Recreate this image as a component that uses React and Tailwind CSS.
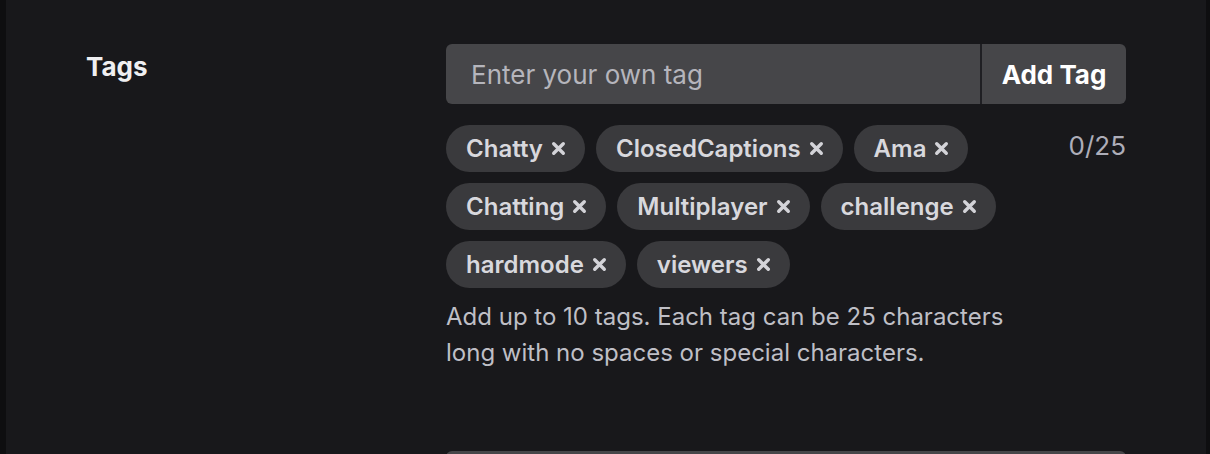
import React from "react";

const tags = ["Chatty", "ClosedCaptions", "Ama", "Chatting", "Multiplayer", "challenge", "hardmode", "viewers"];

function X() {
  return (
    <svg width="17" height="17" viewBox="0 0 16 16" className="shrink-0">
      <path d="M3.5 3.5 L12.5 12.5 M12.5 3.5 L3.5 12.5" stroke="#d3d3d8" strokeWidth="3.2" strokeLinecap="round" />
    </svg>
  );
}

export default function App() {
  return (
    <div
      className="w-[1210px] h-[454px] overflow-hidden flex bg-[#0e0e10]"
      style={{ fontFamily: "Inter, 'Noto Sans', sans-serif" }}
    >
      <div className="w-[6px] shrink-0 bg-[#0e0e10]" />
      <div className="w-[1200px] h-full bg-[#18181b] flex flex-col">
        <div className="ml-[80px] w-[1040px] h-[5px] bg-[#1f1f23]" />
        <div className="flex pl-[80px] pt-[44px]">
          <div className="w-[360px] shrink-0 pt-[6px] text-[26px] leading-[34px] font-bold text-[#efeff1]">Tags</div>
          <div className="w-[680px] flex flex-col">
            <div className="flex h-[60px] rounded-[6px] overflow-hidden">
              <div className="flex-1 bg-[#464649] flex items-center pl-[25px] text-[26px] text-[#b5b5bc]">
                Enter your own tag
              </div>
              <div className="w-[2px] bg-[#1f1f23]" />
              <div className="w-[144px] bg-[#464649] flex items-center justify-center text-[26px] font-bold text-[#ffffff]">
                Add Tag
              </div>
            </div>
            <div className="flex justify-between mt-[21px]">
              <div className="w-[600px] flex flex-wrap gap-x-[11px] gap-y-[11px]">
                {tags.map((t) => (
                  <div
                    key={t}
                    className="h-[47px] rounded-full bg-[#3a3a3d] flex items-center gap-[7px] pl-[20px] pr-[18px] text-[24px] font-semibold text-[#d8d8dd]"
                  >
                    <span>{t}</span>
                    <X />
                  </div>
                ))}
              </div>
              <div className="pt-[4px] text-[26px] leading-[34px] text-[#adadb8]">0/25</div>
            </div>
            <div className="mt-[11px] w-[585px] text-[24px] leading-[36px] text-[#bfbfc6]">
              Add up to 10 tags. Each tag can be 25 characters long with no spaces or special characters.
            </div>
            <div className="mt-[80px] h-[40px] rounded-t-[6px] bg-[#464649]" />
          </div>
        </div>
      </div>
      <div className="w-[4px] shrink-0 bg-[#0e0e10]" />
    </div>
  );
}
